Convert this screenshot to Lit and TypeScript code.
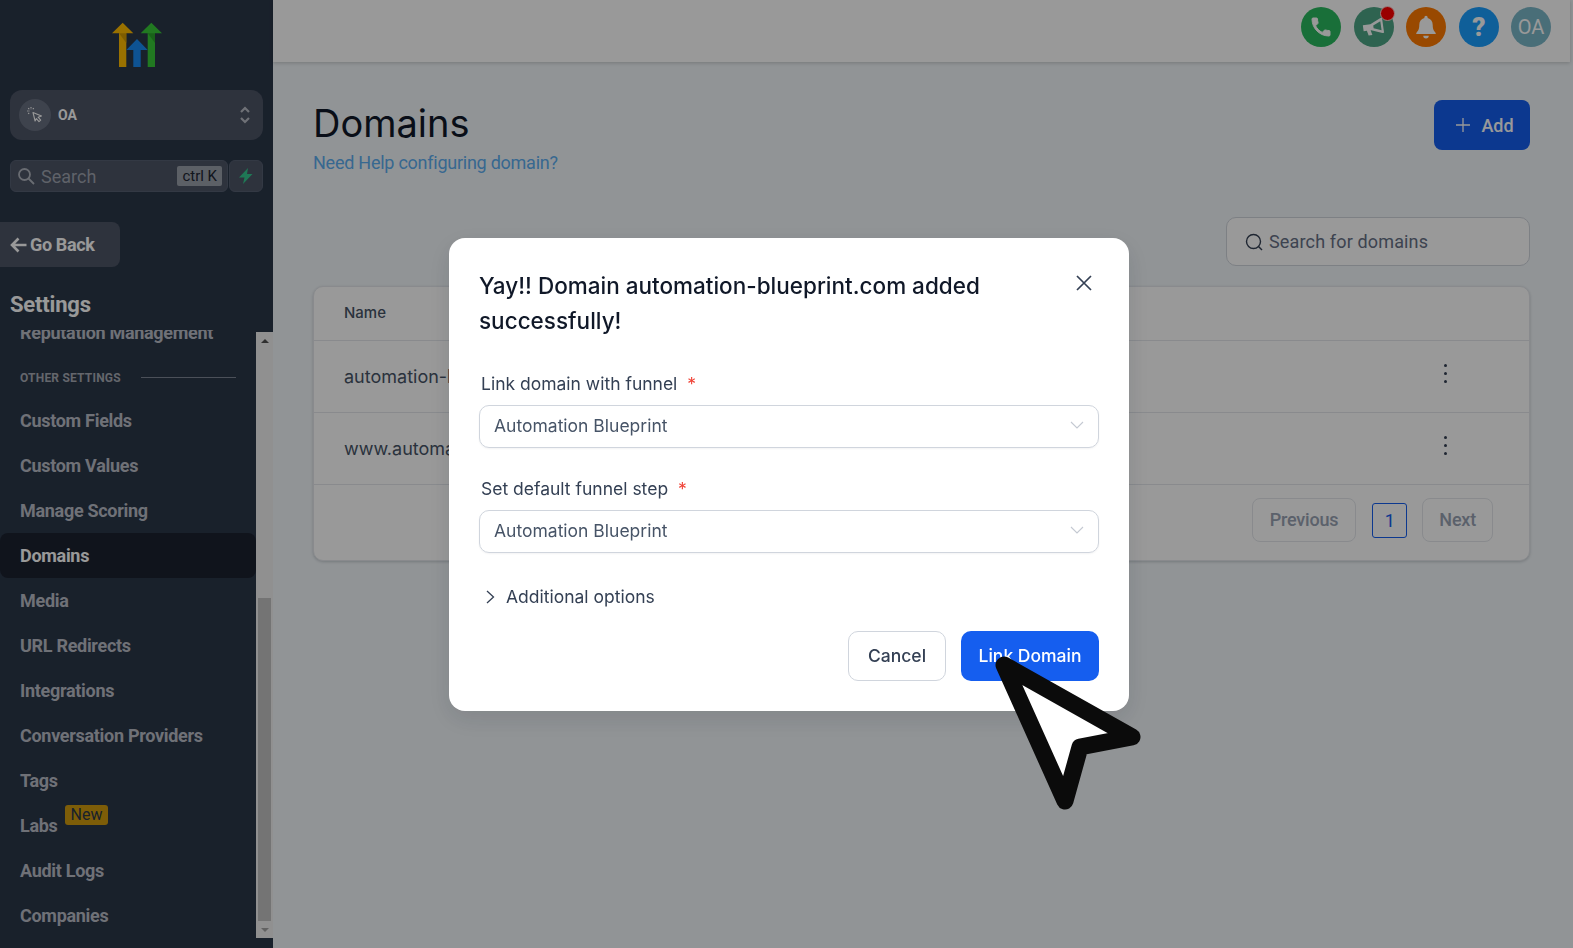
import { LitElement, html, css, svg } from 'lit';
import { customElement } from 'lit/decorators.js';

const NAV_ITEMS = [
  'Custom Fields',
  'Custom Values',
  'Manage Scoring',
  'Domains',
  'Media',
  'URL Redirects',
  'Integrations',
  'Conversation Providers',
  'Tags',
  'Labs',
  'Audit Logs',
  'Companies',
];

const chevronDown = svg`<path d="M1 1l6 6 6-6" fill="none" stroke="#c4c9d2" stroke-width="1.1" />`;

@customElement('app-root')
export class AppRoot extends LitElement {
  static styles = css`
    :host {
      display: flex;
      width: 100%;
      height: 100vh;
      overflow: hidden;
      background: #f2f7fa;
      font-family: 'Inter', 'Roboto', sans-serif;
      color: #101828;
    }

    /* sidebar */
    .sidebar {
      flex: 0 0 273px;
      height: 100%;
      background: #2b3749;
      display: flex;
      flex-direction: column;
      font-family: 'Roboto', sans-serif;
      color: #fff;
      overflow: hidden;
    }
    .logo {
      display: flex;
      justify-content: center;
      padding-top: 22px;
      height: 90px;
      box-sizing: border-box;
      flex: none;
    }
    .account {
      margin: 0 10px;
      height: 50px;
      flex: none;
      border-radius: 12px;
      background: #4d5566;
      display: flex;
      align-items: center;
      padding: 0 12px 0 9px;
      gap: 7px;
      box-sizing: border-box;
      font-size: 14px;
      font-weight: 700;
    }
    .account-icon {
      width: 32px;
      height: 32px;
      border-radius: 50%;
      background: #687080;
      display: flex;
      align-items: center;
      justify-content: center;
    }
    .account-name {
      flex: 1;
    }
    .search-row {
      margin: 20px 10px 0;
      display: flex;
      gap: 1px;
      height: 32px;
      flex: none;
    }
    .side-search {
      flex: 1;
      display: flex;
      align-items: center;
      border: 1px solid #566072;
      background: #4d5566;
      border-radius: 6px;
      padding: 0 5px 0 6px;
      gap: 6px;
      font-size: 18px;
      color: #9ea4af;
    }
    .side-search span:first-of-type {
      flex: 1;
    }
    .kbd {
      background: #9aa0aa;
      color: #1d2532;
      font-size: 15px;
      border-radius: 2px;
      padding: 0 5px;
      height: 20px;
      line-height: 20px;
    }
    .bolt {
      flex: 0 0 34px;
      box-sizing: border-box;
      border: 1px solid #566072;
      background: #4d5566;
      border-radius: 6px;
      display: flex;
      align-items: center;
      justify-content: center;
    }
    .go-back {
      margin-top: 30px;
      width: 120px;
      height: 45px;
      flex: none;
      box-sizing: border-box;
      border-radius: 0 8px 8px 0;
      background: #4d5566;
      display: flex;
      align-items: center;
      padding-left: 10px;
      gap: 3px;
      font-size: 18px;
      font-weight: 700;
      letter-spacing: -0.35px;
    }
    .settings {
      font-size: 22px;
      font-weight: 700;
      letter-spacing: -0.2px;
      padding-left: 10px;
      height: 63px;
      line-height: 75px;
      box-sizing: border-box;
      flex: none;
    }
    .nav-wrap {
      flex: 1;
      min-height: 0;
      display: flex;
      padding-bottom: 10px;
    }
    .nav {
      flex: 0 0 256px;
      overflow: hidden;
    }
    .nav-inner {
      margin-top: -18px;
    }
    .nav-item {
      height: 45px;
      line-height: 45px;
      padding-left: 20px;
      border-radius: 8px;
      font-size: 18px;
      font-weight: 700;
      letter-spacing: -0.3px;
      color: #b9bdc6;
      white-space: nowrap;
      position: relative;
    }
    .nav-item.clipped {
      line-height: 42px;
    }
    .nav-item.active {
      background: #1b2230;
      color: #fff;
    }
    .new-tag {
      display: inline-block;
      margin-left: 7px;
      vertical-align: 12px;
      height: 20px;
      line-height: 20px;
      padding: 0 6px;
      border-radius: 3px;
      background: #d19b0e;
      color: #2b3749;
      font-size: 16px;
      font-weight: 400;
      letter-spacing: 0;
    }
    .section {
      display: flex;
      align-items: center;
      height: 41px;
      padding-left: 20px;
      gap: 20px;
      font-size: 12px;
      font-weight: 700;
      letter-spacing: 0.2px;
      color: #a7abb4;
    }
    .section i {
      width: 95px;
      height: 1px;
      background: #7e8694;
    }
    .scrollbar {
      flex: 0 0 17px;
      margin-top: 2px;
      background: #f1f1f1;
      display: flex;
      flex-direction: column;
      align-items: center;
      justify-content: space-between;
    }
    .arrow {
      height: 17px;
      display: flex;
      align-items: center;
      justify-content: center;
    }
    .arrow::before {
      content: '';
      border-left: 4px solid transparent;
      border-right: 4px solid transparent;
      border-bottom: 4px solid #505050;
    }
    .arrow.down::before {
      border-bottom: 0;
      border-top: 4px solid #a3a3a3;
    }
    .track {
      flex: 1;
      width: 100%;
      display: flex;
      flex-direction: column;
      justify-content: flex-end;
      align-items: center;
    }
    .thumb {
      width: 13px;
      height: 323px;
      background: #c1c1c1;
    }

    /* main */
    .main {
      flex: 1;
      min-width: 0;
      margin-right: 3px;
      display: flex;
      flex-direction: column;
    }
    .topbar {
      flex: 0 0 62px;
      box-sizing: border-box;
      background: #fff;
      box-shadow: 0 1px 4px rgba(0, 0, 0, 0.2);
      display: flex;
      justify-content: flex-end;
      align-items: flex-start;
      gap: 13px;
      padding: 7px 19px 0 0;
    }
    .circle {
      width: 40px;
      height: 40px;
      border-radius: 50%;
      display: flex;
      align-items: center;
      justify-content: center;
      position: relative;
      color: #fff;
      font-family: 'Roboto', sans-serif;
    }
    .circle.phone {
      background: #2bba5f;
    }
    .circle.horn {
      background: #4ea585;
      margin-right: -1px;
    }
    .circle.bell {
      background: #ff7b00;
    }
    .circle.help {
      background: #1a9fff;
      font-size: 26px;
      font-weight: 900;
    }
    .circle.avatar {
      background: #7bb7c8;
      font-size: 20px;
      margin-left: -1px;
    }
    .dot {
      position: absolute;
      top: -1px;
      right: -1px;
      width: 13px;
      height: 13px;
      border-radius: 50%;
      background: #ff0000;
      border: 1px solid #ffd5d5;
    }
    .content {
      padding: 38px 40px 0;
    }
    .page-head {
      display: flex;
      justify-content: space-between;
      align-items: flex-start;
    }
    h1 {
      margin: 0;
      font-size: 38px;
      font-weight: 400;
      line-height: 46px;
    }
    .help-link {
      font-family: 'Roboto', sans-serif;
      font-size: 18px;
      line-height: 24px;
      margin-top: 5px;
      color: #5cadf0;
      letter-spacing: -0.25px;
    }
    .add {
      width: 96px;
      height: 50px;
      box-sizing: border-box;
      border-radius: 8px;
      background: #155eef;
      color: #fff;
      display: flex;
      align-items: center;
      justify-content: center;
      gap: 11px;
      padding-left: 6px;
      font-family: 'Roboto', sans-serif;
      font-size: 18px;
      font-weight: 500;
    }
    .filter-row {
      display: flex;
      justify-content: flex-end;
      margin-top: 42px;
    }
    .filter {
      width: 304px;
      height: 49px;
      box-sizing: border-box;
      border: 1px solid #d0d5dd;
      border-radius: 10px;
      background: #fff;
      display: flex;
      align-items: center;
      gap: 6px;
      padding-left: 18px;
      font-family: 'Roboto', sans-serif;
      font-size: 18px;
      color: #667085;
      letter-spacing: 0.15px;
    }
    .card {
      margin-top: 20px;
      background: #fff;
      border: 1px solid #e4e7ec;
      border-radius: 10px;
      box-shadow: 0 1px 3px rgba(16, 24, 40, 0.2);
    }
    .row {
      display: flex;
      align-items: center;
      justify-content: space-between;
      height: 72px;
      padding: 0 82px 0 30px;
      border-top: 1px solid #e4e7ec;
      box-sizing: border-box;
      font-size: 18px;
      color: #475467;
    }
    .row.head {
      height: 53px;
      padding-bottom: 3px;
      border-top: 0;
      font-size: 15px;
      font-weight: 500;
    }
    .kebab {
      display: flex;
      flex-direction: column;
      gap: 4.5px;
      margin-top: -6px;
    }
    .kebab i {
      width: 3.5px;
      height: 3.5px;
      border-radius: 50%;
      background: #344054;
    }
    .pager {
      display: flex;
      justify-content: flex-end;
      align-items: center;
      gap: 15px;
      height: 75px;
      padding-right: 36px;
      border-top: 1px solid #e4e7ec;
      font-family: 'Roboto', sans-serif;
      font-size: 18px;
      font-weight: 500;
      letter-spacing: -0.2px;
      color: #98a2b3;
    }
    .page-btn {
      height: 44px;
      box-sizing: border-box;
      border: 1px solid #e4e7ec;
      border-radius: 8px;
      padding: 0 17px;
      line-height: 42px;
      margin: -5px 1px 0 0;
    }
    .page-btn.next {
      padding: 0 16px;
      margin-right: 0;
    }
    .page-num {
      width: 35px;
      height: 35px;
      line-height: 33px;
      box-sizing: border-box;
      border: 1px solid #155eef;
      border-radius: 3px;
      text-align: center;
      color: #155eef;
      font-weight: 400;
      margin-top: -5px;
    }

    /* modal */
    .overlay {
      position: fixed;
      inset: 0;
      background: rgba(0, 0, 0, 0.4);
      display: flex;
      align-items: center;
      justify-content: center;
      padding-left: 5px;
    }
    .modal {
      width: 680px;
      height: 473px;
      box-sizing: border-box;
      background: #fff;
      border-radius: 16px;
      padding: 30px;
      box-shadow: 0 8px 24px rgba(16, 24, 40, 0.12);
      display: flex;
      flex-direction: column;
    }
    .modal-head {
      display: flex;
      justify-content: space-between;
      align-items: flex-start;
    }
    .modal-title {
      width: 540px;
      font-size: 22.5px;
      font-weight: 500;
      line-height: 35px;
      color: #101828;
    }
    .close {
      margin: 7px 7px 0 0;
    }
    label {
      display: block;
      margin: 27px 0 0 2px;
      font-size: 17.5px;
      line-height: 28px;
      color: #344054;
    }
    .modal-head + label {
      margin-top: 32px;
    }
    label b {
      color: #f04438;
      font-weight: 400;
      margin-left: 5px;
    }
    .select {
      margin-top: 7px;
      height: 43px;
      flex: none;
      box-sizing: border-box;
      border: 1px solid #d0d5dd;
      border-radius: 10px;
      box-shadow: 0 1px 2px rgba(16, 24, 40, 0.05);
      display: flex;
      align-items: center;
      justify-content: space-between;
      padding: 0 14px 2px;
      font-size: 17.5px;
      color: #475467;
    }
    .more {
      margin-top: 30px;
      display: flex;
      align-items: center;
      gap: 11px;
      padding-left: 7px;
      font-size: 17.5px;
      line-height: 28px;
      color: #344054;
    }
    .actions {
      margin-top: auto;
      display: flex;
      justify-content: flex-end;
      gap: 15px;
    }
    .btn {
      height: 50px;
      box-sizing: border-box;
      border-radius: 10px;
      display: flex;
      align-items: center;
      justify-content: center;
      font-size: 17.5px;
      font-weight: 500;
    }
    .btn.cancel {
      width: 98px;
      border: 1px solid #d0d5dd;
      color: #344054;
    }
    .btn.primary {
      width: 138px;
      background: #155eef;
      color: #fff;
    }
    .cursor {
      position: fixed;
      left: 980px;
      top: 640px;
    }
  `;

  private renderLogo() {
    return html`<svg width="50" height="46" viewBox="112 22 50 46">
      <path d="M119 67V33.3h-7L122.7 22.7 133.3 33.3h-7V67z" fill="#ffbc00" />
      <path d="M119 33.3h7.3V43z" fill="#d49c00" />
      <path d="M147.7 67V33.3h-7L151.3 22.7 162 33.3h-7V67z" fill="#37ca37" />
      <path d="M147.7 33.3H155V43z" fill="#2ba52b" />
      <path d="M133.3 67V50h-7L137 39 147.7 50h-7V67z" fill="#188bf6" />
    </svg>`;
  }

  private renderNavItem(name: string) {
    return html`<div class="nav-item ${name === 'Domains' ? 'active' : ''}">
      ${name}${name === 'Labs' ? html`<span class="new-tag">New</span>` : ''}
    </div>`;
  }

  private renderSelect(value: string) {
    return html`<div class="select">
      <span>${value}</span>
      <svg width="14" height="8" viewBox="0 0 14 8">${chevronDown}</svg>
    </div>`;
  }

  render() {
    return html`
      <aside class="sidebar">
        <div class="logo">${this.renderLogo()}</div>
        <div class="account">
          <div class="account-icon">
            <svg width="18" height="18" viewBox="0 0 18 18" fill="none" stroke="#fff" stroke-width="1.1">
              <path d="M7 6.5l8.5 3.4-3.4 1.3 2.6 3-1.7 1.4-2.6-3-1.3 2.4z" stroke-linejoin="round" />
              <path d="M5 1v2.2M1.2 5h2.4M2.2 2.2l1.5 1.5M7.8 2.2L6.4 3.7M2.2 7.8l1.4-1.4" stroke-dasharray="1.4 0.6" />
            </svg>
          </div>
          <span class="account-name">OA</span>
          <svg width="12" height="22" viewBox="0 0 12 22" fill="none" stroke="#b9bdc6" stroke-width="2.2">
            <path d="M2 8L6 4l4 4M2 14l4 4 4-4" />
          </svg>
        </div>
        <div class="search-row">
          <div class="side-search">
            <svg width="18" height="18" viewBox="0 0 18 18" fill="none" stroke="#b0b5be" stroke-width="1.8">
              <circle cx="7.5" cy="7.5" r="5.5" />
              <path d="M11.5 11.5L17 17" />
            </svg>
            <span>Search</span>
            <span class="kbd">ctrl K</span>
          </div>
          <div class="bolt">
            <svg width="14" height="16" viewBox="0 0 14 16"><path d="M9 0L0 9.5h5.500L4 16l9.500-10H8z" fill="#35c98f" /></svg>
          </div>
        </div>
        <div class="go-back">
          <svg width="17" height="16" viewBox="0 0 17 16" fill="none" stroke="#fff" stroke-width="2.6">
            <path d="M8.5 1.5L2 8l6.5 6.5M2.5 8H16.5" />
          </svg>
          <span>Go Back</span>
        </div>
        <div class="settings">Settings</div>
        <div class="nav-wrap">
          <nav class="nav">
            <div class="nav-inner">
              <div class="nav-item clipped">Reputation Management</div>
              <div class="section"><span>OTHER SETTINGS</span><i></i></div>
              ${NAV_ITEMS.map((n) => this.renderNavItem(n))}
            </div>
          </nav>
          <div class="scrollbar">
            <div class="arrow"></div>
            <div class="track"><div class="thumb"></div></div>
            <div class="arrow down"></div>
          </div>
        </div>
      </aside>

      <div class="main">
        <header class="topbar">
          <div class="circle phone">
            <svg width="24" height="24" viewBox="0 0 24 24" fill="#fff" stroke="#fff" stroke-width="1" stroke-linejoin="round">
              <path d="M6.6 10.8c1.44 2.83 3.76 5.14 6.6 6.6l2.2-2.2c.27-.27.67-.36 1-.24 1.12.37 2.33.57 3.6.57.55 0 1 .45 1 1V20c0 .55-.45 1-1 1C10.6 21 3 13.4 3 4c0-.55.45-1 1-1h3.5c.55 0 1 .45 1 1 0 1.25.2 2.45.57 3.57.11.35.03.74-.25 1.02z" />
            </svg>
          </div>
          <div class="circle horn">
            <svg width="26" height="26" viewBox="0 0 24 24">
              <path fill="#fff" fill-rule="evenodd" transform="rotate(-8 12 12)" d="M2 9h7l10-4.5h1.5v14H19L9 14.5H8.5l1 4.5h-3.5l-1-4.5H2zM11.5 10.5v2.5l7 3V7.5z" />
            </svg>
            <span class="dot"></span>
          </div>
          <div class="circle bell">
            <svg width="26" height="26" viewBox="0 0 24 24" fill="#fff">
              <path d="M12 1.5a1.5 1.5 0 0 0-1.5 1.500v.7C7.4 4.400 5.800 7 5.800 10.200c0 4-1.200 5.600-2.600 7-.5.5-.2 1.300.5 1.300h16.600c.7 0 1-.8.5-1.300-1.400-1.400-2.600-3-2.600-7 0-3.200-1.600-5.800-4.700-6.500V3A1.500 1.500 0 0 0 12 1.500z" />
              <path d="M9.5 20h5a2.500 2.500 0 0 1-5 0z" />
            </svg>
          </div>
          <div class="circle help">?</div>
          <div class="circle avatar">OA</div>
        </header>

        <section class="content">
          <div class="page-head">
            <div>
              <h1>Domains</h1>
              <div class="help-link">Need Help configuring domain?</div>
            </div>
            <div class="add">
              <svg width="14" height="14" viewBox="0 0 14 14" stroke="#fff" stroke-width="1.3"><path d="M7 0v14M0 7h14" /></svg>
              <span>Add</span>
            </div>
          </div>
          <div class="filter-row">
            <div class="filter">
              <svg width="18" height="18" viewBox="0 0 18 18" fill="none" stroke="#344054" stroke-width="1.4">
                <circle cx="8.5" cy="8.5" r="7" />
                <path d="M13.5 13.5L17 17" />
              </svg>
              <span>Search for domains</span>
            </div>
          </div>
          <div class="card">
            <div class="row head"><span>Name</span></div>
            <div class="row">
              <span>automation-blueprint.com</span>
              <span class="kebab"><i></i><i></i><i></i></span>
            </div>
            <div class="row">
              <span>www.automation-blueprint.com</span>
              <span class="kebab"><i></i><i></i><i></i></span>
            </div>
            <div class="pager">
              <span class="page-btn">Previous</span>
              <span class="page-num">1</span>
              <span class="page-btn next">Next</span>
            </div>
          </div>
        </section>
      </div>

      <div class="overlay">
        <div class="modal">
          <div class="modal-head">
            <div class="modal-title">Yay!! Domain automation-blueprint.com added successfully!</div>
            <svg class="close" width="16" height="16" viewBox="0 0 16 16" stroke="#344054" stroke-width="1.7">
              <path d="M1 1l14 14M15 1L1 15" />
            </svg>
          </div>
          <label>Link domain with funnel <b>*</b></label>
          ${this.renderSelect('Automation Blueprint')}
          <label>Set default funnel step <b>*</b></label>
          ${this.renderSelect('Automation Blueprint')}
          <div class="more">
            <svg width="9" height="14" viewBox="0 0 9 14" fill="none" stroke="#344054" stroke-width="1.3"><path d="M1 1l6.5 6L1 13" /></svg>
            <span>Additional options</span>
          </div>
          <div class="actions">
            <div class="btn cancel">Cancel</div>
            <div class="btn primary">Link Domain</div>
          </div>
        </div>
      </div>

      <svg class="cursor" width="170" height="180" viewBox="980 640 170 180">
        <path
          d="M1004 665L1132 737 1080 747 1065 801Z"
          fill="#fff"
          stroke="#0b0b0b"
          stroke-width="17"
          stroke-linejoin="round"
        />
      </svg>
    `;
  }
}

declare global {
  interface HTMLElementTagNameMap {
    'app-root': AppRoot;
  }
}
